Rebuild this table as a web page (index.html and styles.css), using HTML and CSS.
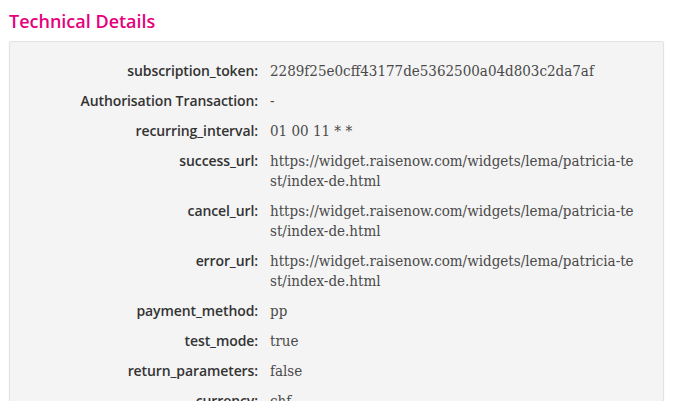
FILE: index.html
```html
<!DOCTYPE html>
<html>
<head>
<meta charset="utf-8">
<link rel="stylesheet" href="styles.css">
</head>
<body>
<h2 class="title">Technical Details</h2>
<div class="panel">
  <dl class="details">
    <div class="row"><dt>subscription_token:</dt><dd>2289f25e0cff43177de5362500a04d803c2da7af</dd></div>
    <div class="row"><dt>Authorisation Transaction:</dt><dd>-</dd></div>
    <div class="row"><dt>recurring_interval:</dt><dd>01 00 11 * *</dd></div>
    <div class="row"><dt>success_url:</dt><dd>https://widget.raisenow.com/widgets/lema/patricia-te<br>st/index-de.html</dd></div>
    <div class="row"><dt>cancel_url:</dt><dd>https://widget.raisenow.com/widgets/lema/patricia-te<br>st/index-de.html</dd></div>
    <div class="row"><dt>error_url:</dt><dd>https://widget.raisenow.com/widgets/lema/patricia-te<br>st/index-de.html</dd></div>
    <div class="row"><dt>payment_method:</dt><dd>pp</dd></div>
    <div class="row"><dt>test_mode:</dt><dd>true</dd></div>
    <div class="row"><dt>return_parameters:</dt><dd>false</dd></div>
    <div class="row"><dt>currency:</dt><dd>chf</dd></div>
  </dl>
</div>
</body>
</html>
```

FILE: styles.css
```css
html, body {
  margin: 0;
  padding: 0;
  background: #ffffff;
}
body {
  padding: 0 11px 0 9px;
  font-family: "Open Sans", sans-serif;
}
.title {
  margin: 0;
  padding-top: 9px;
  height: 41px;
  box-sizing: border-box;
  font-size: 18px;
  line-height: 24px;
  font-weight: 600;
  color: #e5007d;
}
.panel {
  background: #f4f4f4;
  border: 1px solid #e2e2e2;
  border-radius: 2px;
  box-shadow: 0 1px 2px rgba(0,0,0,0.06);
  padding: 19px 0 20px;
}
.details {
  margin: 0;
}
.row {
  display: flex;
  gap: 12px;
  padding-bottom: 10px;
}
dt {
  width: 248px;
  flex: none;
  text-align: right;
  font-size: 14px;
  letter-spacing: -0.1px;
  line-height: 20px;
  font-weight: 600;
  color: #333333;
}
dd {
  margin: 0;
  font-family: "DejaVu Serif Condensed", "DejaVu Serif", serif;
  font-size: 15px;
  line-height: 20px;
  color: #4a4a4a;
}
```
